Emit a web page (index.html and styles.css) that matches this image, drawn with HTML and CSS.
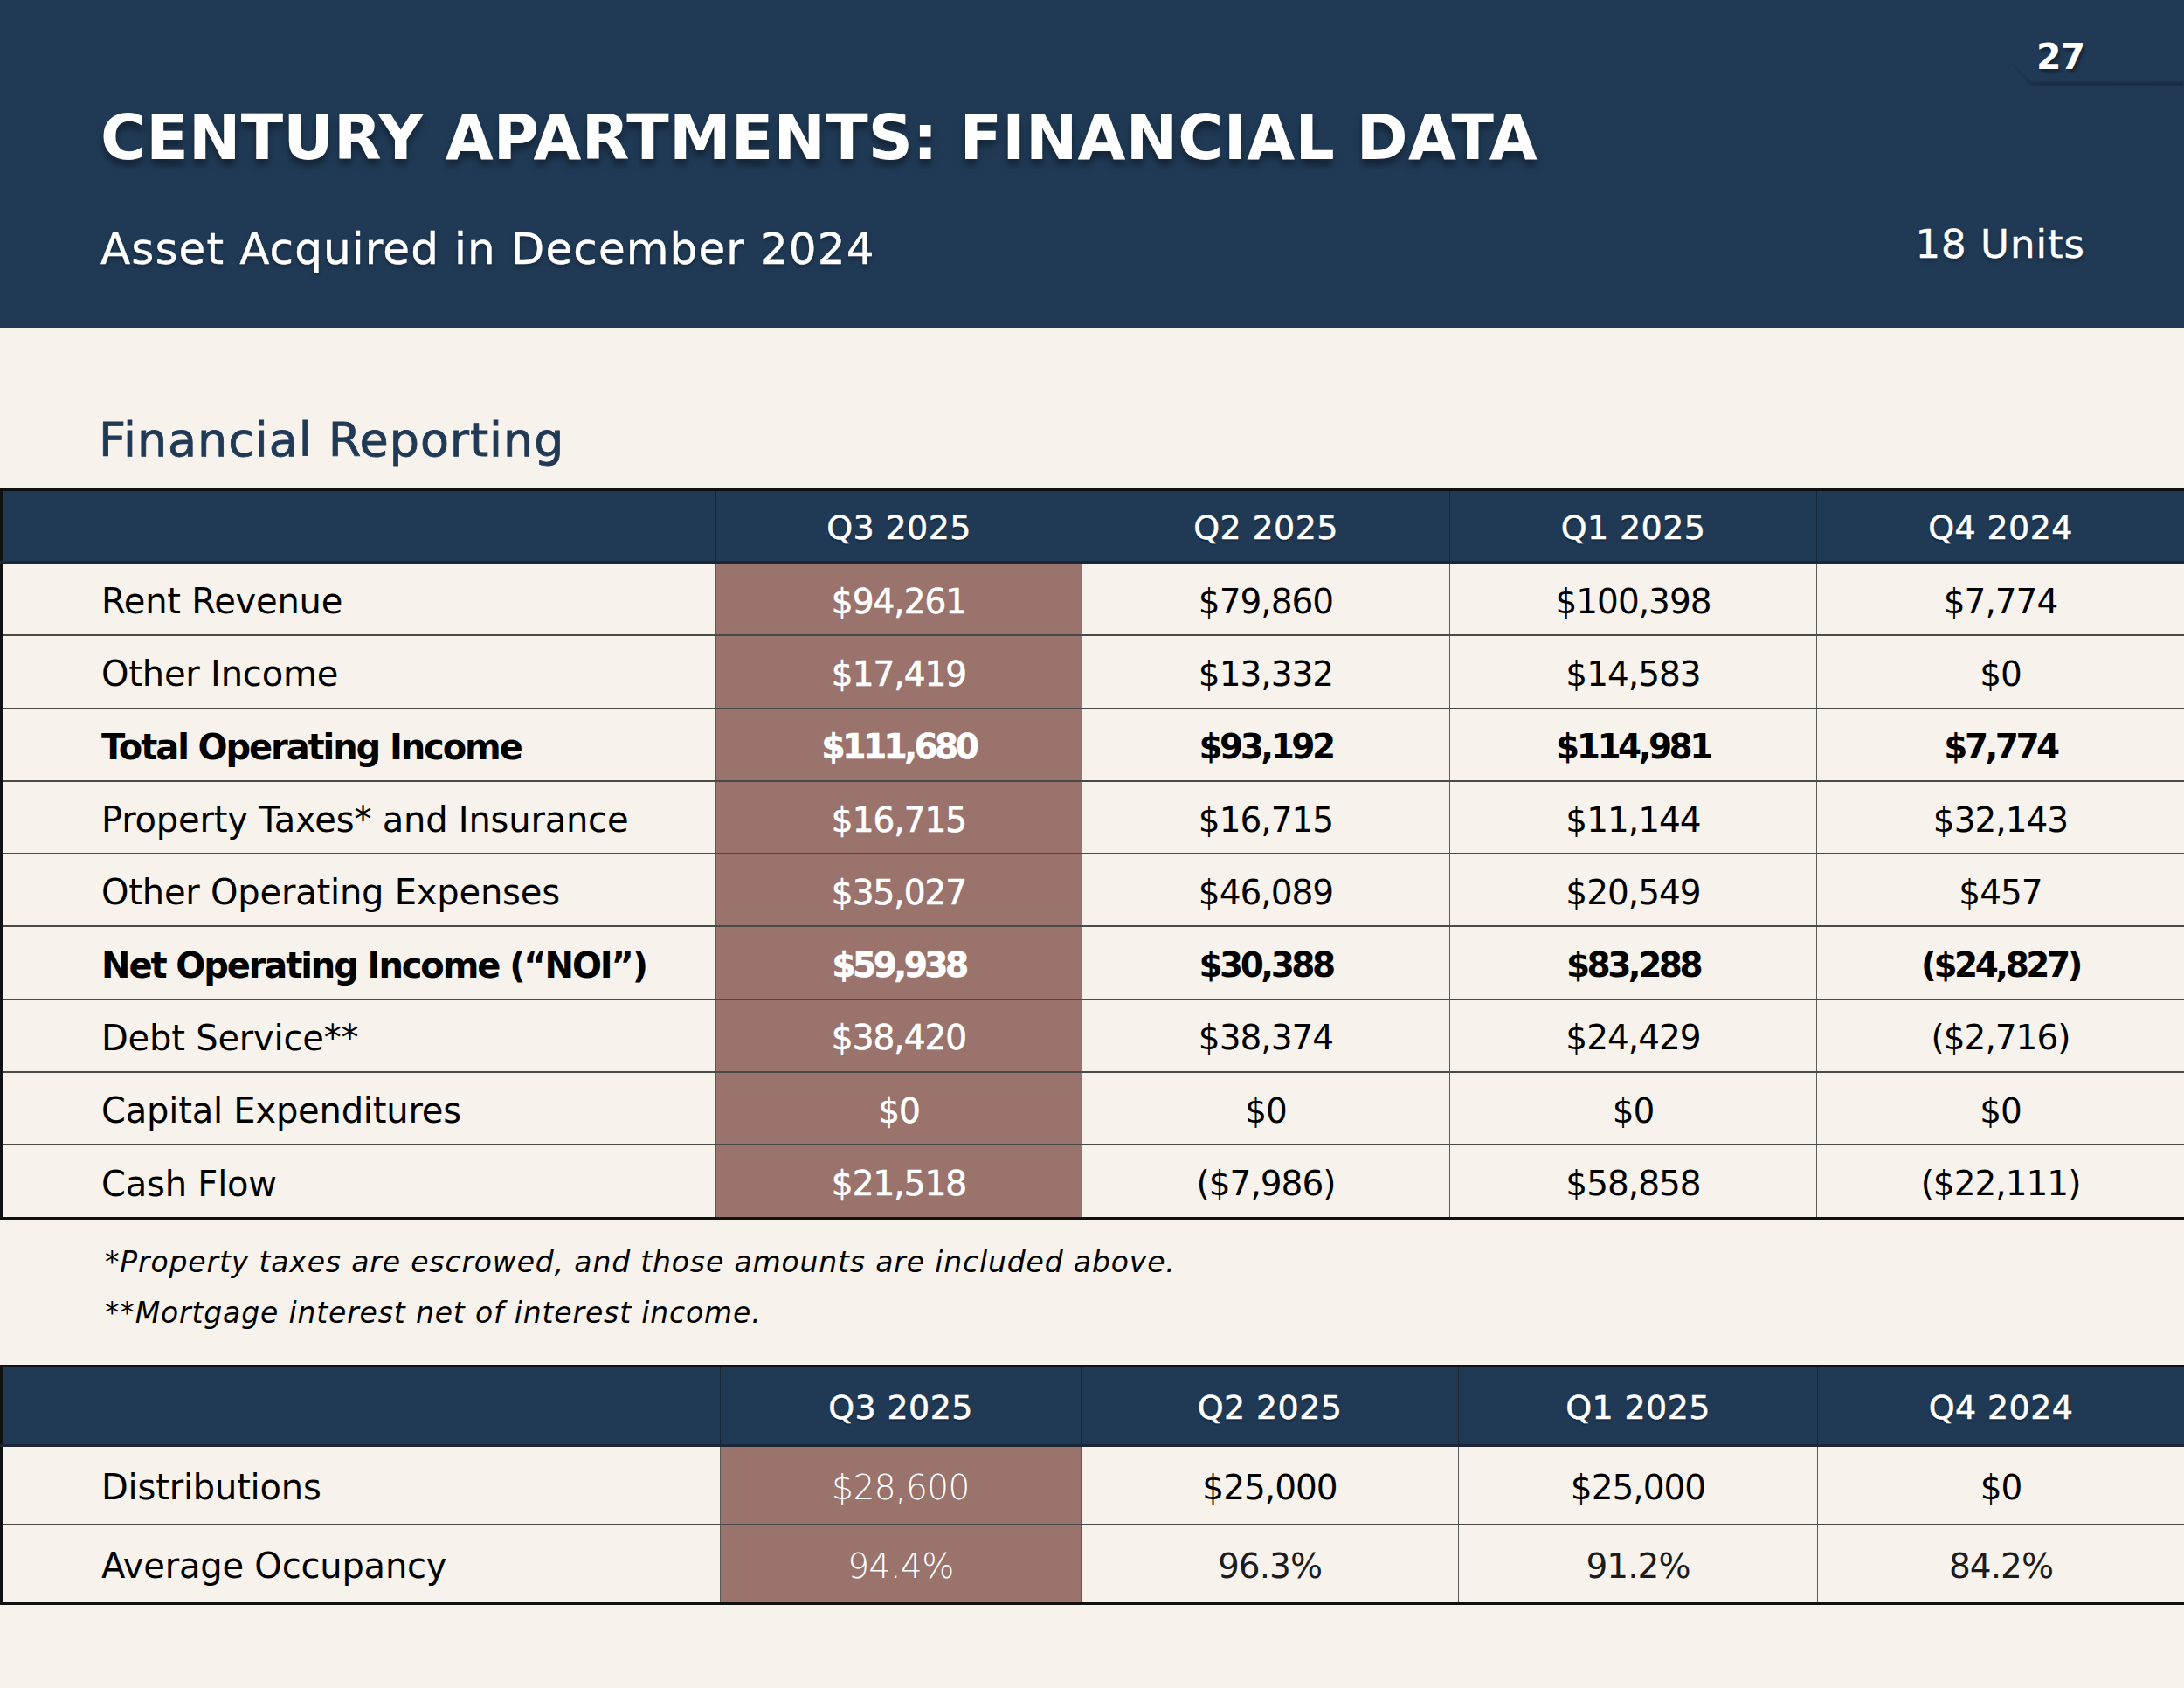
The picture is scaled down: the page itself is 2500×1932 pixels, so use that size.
FILE: index.html
```html
<!DOCTYPE html>
<html lang="en">
<head>
<meta charset="utf-8">
<title>Century Apartments: Financial Data</title>
<link rel="stylesheet" href="styles.css">
</head>
<body>
<div class="page">
  <header class="banner">
    <div class="tab">
      <svg class="tab-edge" width="200" height="100" viewBox="0 0 200 100" aria-hidden="true">
        <defs>
          <filter id="soft" x="-20%" y="-20%" width="140%" height="140%">
            <feGaussianBlur stdDeviation="1.2"/>
          </filter>
          <linearGradient id="fade" x1="0" y1="0" x2="1" y2="0">
            <stop offset="0" stop-color="#0e1b2a" stop-opacity="0"/>
            <stop offset="0.18" stop-color="#0e1b2a" stop-opacity="0.55"/>
            <stop offset="1" stop-color="#0e1b2a" stop-opacity="0.6"/>
          </linearGradient>
        </defs>
        <polyline points="0,70 25,96 200,96" fill="none" stroke="url(#fade)" stroke-width="3" filter="url(#soft)"/>
      </svg>
      <span class="pageno">27</span>
    </div>
    <h1 class="title">CENTURY APARTMENTS: FINANCIAL DATA</h1>
    <div class="subrow">
      <div class="subtitle">Asset Acquired in December 2024</div>
      <div class="units">18 Units</div>
    </div>
  </header>

  <h2 class="section">Financial Reporting</h2>

  <table class="fin fin-main">
    <colgroup>
      <col class="w-label"><col class="w-q3"><col class="w-q2"><col class="w-q1"><col class="w-q4">
    </colgroup>
    <thead>
      <tr><th></th><th>Q3 2025</th><th>Q2 2025</th><th>Q1 2025</th><th>Q4 2024</th></tr>
    </thead>
    <tbody>
      <tr><td class="label">Rent Revenue</td><td class="hl">$94,261</td><td>$79,860</td><td>$100,398</td><td>$7,774</td></tr>
      <tr><td class="label">Other Income</td><td class="hl">$17,419</td><td>$13,332</td><td>$14,583</td><td>$0</td></tr>
      <tr class="strong"><td class="label">Total Operating Income</td><td class="hl">$111,680</td><td>$93,192</td><td>$114,981</td><td>$7,774</td></tr>
      <tr><td class="label">Property Taxes* and Insurance</td><td class="hl">$16,715</td><td>$16,715</td><td>$11,144</td><td>$32,143</td></tr>
      <tr><td class="label">Other Operating Expenses</td><td class="hl">$35,027</td><td>$46,089</td><td>$20,549</td><td>$457</td></tr>
      <tr class="strong"><td class="label">Net Operating Income (“NOI”)</td><td class="hl">$59,938</td><td>$30,388</td><td>$83,288</td><td>($24,827)</td></tr>
      <tr><td class="label">Debt Service**</td><td class="hl">$38,420</td><td>$38,374</td><td>$24,429</td><td>($2,716)</td></tr>
      <tr><td class="label">Capital Expenditures</td><td class="hl">$0</td><td>$0</td><td>$0</td><td>$0</td></tr>
      <tr><td class="label">Cash Flow</td><td class="hl">$21,518</td><td>($7,986)</td><td>$58,858</td><td>($22,111)</td></tr>
    </tbody>
  </table>

  <div class="notes">
    <p>*Property taxes are escrowed, and those amounts are included above.</p>
    <p>**Mortgage interest net of interest income.</p>
  </div>

  <table class="fin fin-dist">
    <colgroup>
      <col class="d-label"><col class="d-q3"><col class="d-q2"><col class="d-q1"><col class="d-q4">
    </colgroup>
    <thead>
      <tr><th></th><th>Q3 2025</th><th>Q2 2025</th><th>Q1 2025</th><th>Q4 2024</th></tr>
    </thead>
    <tbody>
      <tr><td class="label">Distributions</td><td class="hl thin">$28,600</td><td>$25,000</td><td>$25,000</td><td>$0</td></tr>
      <tr><td class="label">Average Occupancy</td><td class="hl thin">94.4%</td><td class="soft">96.3%</td><td class="soft">91.2%</td><td class="soft">84.2%</td></tr>
    </tbody>
  </table>
</div>
</body>
</html>
```

FILE: styles.css
```css
html, body {
  margin: 0;
  padding: 0;
  background: #f7f3ec;
}

.page {
  width: 2500px;
  height: 1932px;
  background: #f7f3ec;
  font-family: "DejaVu Sans", "Liberation Sans", sans-serif;
  color: #000;
  overflow: hidden;
}

/* ---------- banner ---------- */
.banner {
  position: relative;
  height: 375px;
  box-sizing: border-box;
  background: #203a56;
  color: #fff;
  padding: 122px 113px 0 115px;
}

.title {
  margin: 0;
  font-size: 71px;
  line-height: 71px;
  font-weight: bold;
  letter-spacing: 0.2px;
  text-shadow: 0 7px 9px rgba(0, 0, 0, 0.4);
}

.subrow {
  display: flex;
  justify-content: space-between;
  align-items: flex-end;
  margin-top: 64px;
}

.subtitle {
  font-size: 50px;
  line-height: 50px;
  letter-spacing: 1.1px;
  -webkit-text-stroke: 0.4px #fff;
  text-shadow: 0 3px 5px rgba(0, 0, 0, 0.35);
}

.units {
  font-size: 45px;
  line-height: 45px;
  letter-spacing: 1px;
  margin-bottom: 8px;
  -webkit-text-stroke: 0.4px #fff;
  text-shadow: 0 3px 5px rgba(0, 0, 0, 0.35);
}

.tab {
  position: absolute;
  top: 0;
  right: 0;
  width: 200px;
  height: 100px;
}

.tab-edge {
  position: absolute;
  left: 0;
  top: 0;
  display: block;
}

.pageno {
  position: absolute;
  left: 31px;
  top: 45px;
  font-size: 41px;
  line-height: 41px;
  font-weight: bold;
  letter-spacing: -1px;
  color: #fff;
  text-shadow: 2px 3px 4px rgba(0, 0, 0, 0.45);
}

/* ---------- section title ---------- */
.section {
  margin: 102px 0 0 113px;
  font-size: 54px;
  line-height: 53px;
  height: 53px;
  font-weight: normal;
  letter-spacing: 0.9px;
  color: #203a56;
  -webkit-text-stroke: 0.8px #203a56;
}

/* ---------- tables ---------- */
.fin {
  width: 2500px;
  table-layout: fixed;
  border-collapse: collapse;
  border: 3px solid #111;
}

.fin-main {
  margin-top: 29px;
}

.w-label { width: 818px; }
.w-q3 { width: 419px; }
.w-q2 { width: 421px; }
.w-q1 { width: 420px; }
.w-q4 { width: 422px; }

.d-label { width: 823px; }
.d-q3 { width: 413px; }
.d-q2 { width: 432px; }
.d-q1 { width: 411px; }
.d-q4 { width: 421px; }

.fin th {
  background: #203a56;
  color: #fff;
  font-weight: normal;
  font-size: 38px;
  letter-spacing: 0.4px;
  height: 76px;
  padding: 4px 0 0;
  border-left: 1px solid #1b2532;
  border-bottom: 3px solid #1b2636;
  text-align: center;
  -webkit-text-stroke: 0.5px #fff;
  text-shadow: 0 2px 2px rgba(0, 0, 0, 0.35);
}

.fin td {
  height: 76.3px;
  padding: 5px 0 0;
  font-size: 39px;
  letter-spacing: -1px;
  text-align: center;
  border-top: 2px solid #4a4a48;
  border-left: 1px solid #5a5a58;
}

.fin thead + tbody tr:first-child td {
  border-top: 3px solid #1b2636;
}

.fin td.label {
  text-align: left;
  padding-left: 113px;
  font-size: 40px;
  letter-spacing: -0.2px;
}

.fin td.hl {
  background: #9a736d;
  color: #fff;
  -webkit-text-stroke: 0.6px #fff;
}

.fin tr.strong td {
  font-weight: bold;
  letter-spacing: -3.5px;
}

.fin tr.strong td.label {
  letter-spacing: -2.1px;
}

.fin-dist th {
  height: 84px;
}

.fin-dist td {
  height: 83px;
}

.fin td.hl.thin {
  font-weight: 300;
  -webkit-text-stroke: 0;
  letter-spacing: -0.5px;
}

.fin td.soft {
  color: #1c1c1c;
}

/* ---------- footnotes ---------- */
.notes {
  margin: 20px 0 30px 120px;
  font-style: italic;
  font-size: 33px;
  line-height: 58px;
  letter-spacing: 0.85px;
}

.notes p {
  margin: 0;
}
```
